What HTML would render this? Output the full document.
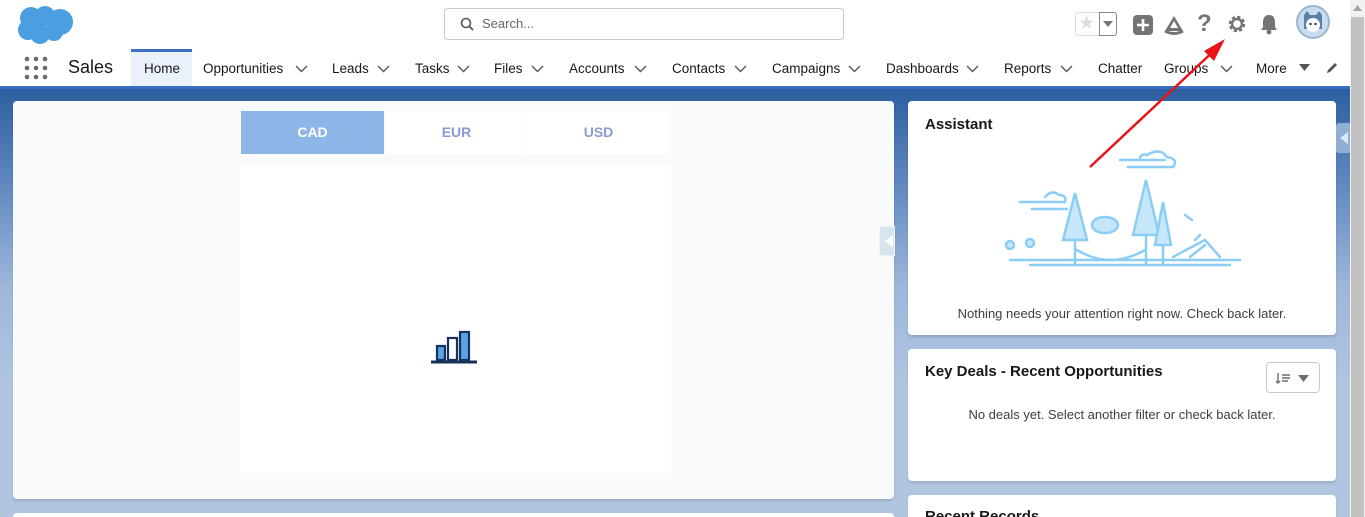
<!DOCTYPE html>
<html style="overflow:hidden;width:1365px;height:517px"><head><meta charset="utf-8">
<style>
*{margin:0;padding:0;box-sizing:border-box}
body{width:1365px;height:517px;overflow:hidden;font-family:"Liberation Sans",sans-serif;position:relative;background:#fff}
.abs{position:absolute}
.nav{position:absolute;top:61px;font-size:13.5px;color:#181818}
.chev{position:absolute;top:65px}
.bg{position:absolute;left:0;top:86px;width:1350px;height:431px;background:linear-gradient(#2b5d9e 0px,#5b85bd 90px,#9db6da 200px,#b1c5e0 300px,#b1c5e0 431px)}
.card{position:absolute;background:#fff;border-radius:4px;box-shadow:0 2px 2px rgba(0,0,0,.12)}
</style></head><body>
<svg class="abs" style="left:16px;top:4px" width="58" height="40" viewBox="0 0 58 40"><g fill="#4b9fe0"><circle cx="15" cy="14" r="11"/><circle cx="29" cy="12" r="10"/><circle cx="44" cy="18" r="13"/><circle cx="12" cy="26" r="10"/><circle cx="24" cy="30" r="10"/><circle cx="38" cy="28" r="9"/></g></svg>
<div class="abs" style="left:444px;top:8px;width:400px;height:32px;border:1px solid #c9c9c9;border-radius:4px;"></div>
<svg class="abs" style="left:460px;top:17px" width="14" height="14" viewBox="0 0 14 14"><circle cx="6" cy="6" r="4.5" fill="none" stroke="#555" stroke-width="1.6"/><path d="M9.3 9.3L13 13" stroke="#555" stroke-width="1.8"/></svg>
<div class="abs" style="left:482px;top:16px;font-size:13px;color:#666">Search...</div>
<div class="abs" style="left:1075px;top:12px;width:42px;height:24px;border:1px solid #ddd;border-radius:3px"></div>
<div class="abs" style="left:1099px;top:12px;width:18px;height:24px;border:1px solid #888;border-radius:0 3px 3px 0"></div>
<div class="abs" style="left:1078px;top:12px;font-size:19px;color:#ddd">★</div>
<svg class="abs" style="left:1103px;top:21px" width="10" height="6"><path d="M0 0H10L5 6Z" fill="#777"/></svg>
<div class="abs" style="left:1133px;top:15px;width:20px;height:20px;background:#747474;border-radius:4px"></div>
<svg class="abs" style="left:1133px;top:15px" width="20" height="20"><path d="M10 4V16M4 10H16" stroke="#fff" stroke-width="2.6"/></svg>
<svg class="abs" style="left:1163px;top:14px" width="22" height="22" viewBox="0 0 22 22"><path d="M11 2L20 17H2Z" fill="#747474"/><path d="M11 7L15 14H7Z" fill="#fff"/><path d="M2 17Q11 22 20 17" stroke="#747474" stroke-width="3" fill="none"/></svg>
<div class="abs" style="left:1197px;top:10px;font-size:24px;color:#747474;font-weight:bold">?</div>
<svg class="abs" style="left:1227px;top:14px" width="20" height="20" viewBox="0 0 20 20"><circle cx="10" cy="10" r="6.5" fill="none" stroke="#747474" stroke-width="3.5" stroke-dasharray="3 2.1"/><circle cx="10" cy="10" r="5" fill="none" stroke="#747474" stroke-width="2.5"/></svg>
<svg class="abs" style="left:1259px;top:13px" width="20" height="22" viewBox="0 0 20 22"><path d="M10 2C5 2 4 6 4 10V14L2 17H18L16 14V10C16 6 15 2 10 2Z" fill="#747474"/><circle cx="10" cy="19" r="2.4" fill="#747474"/></svg>
<div class="abs" style="left:1296px;top:5px;width:34px;height:34px;border-radius:50%;background:#c9dcef;border:2px solid #9bb6cf"></div>
<svg class="abs" style="left:1298px;top:7px" width="30" height="30" viewBox="0 0 30 30"><path d="M6 8L9 4L12 8H18L21 4L24 8V22H6Z" fill="#5c7fa6"/><circle cx="15" cy="18" r="7" fill="#fff"/><circle cx="12.5" cy="17" r="1.2" fill="#234"/><circle cx="17.5" cy="17" r="1.2" fill="#234"/></svg>
<div class="abs" style="left:24px;top:56px;width:24px;height:24px"><svg width="24" height="24"><g fill="#6b6b6b"><circle cx="3" cy="3" r="2.3"/><circle cx="12" cy="3" r="2.3"/><circle cx="21" cy="3" r="2.3"/><circle cx="3" cy="12" r="2.3"/><circle cx="12" cy="12" r="2.3"/><circle cx="21" cy="12" r="2.3"/><circle cx="3" cy="21" r="2.3"/><circle cx="12" cy="21" r="2.3"/><circle cx="21" cy="21" r="2.3"/></g></svg></div>
<div class="abs" style="left:68px;top:57px;font-size:18px;color:#181818">Sales</div>
<div class="abs" style="left:131px;top:49px;width:61px;height:37px;background:#eaf1fa;border-top:3px solid #3a6fc4"></div>
<div class="nav" style="left:144px">Home</div>
<div class="nav" style="left:203px">Opportunities</div>
<div class="nav" style="left:332px">Leads</div>
<div class="nav" style="left:415px">Tasks</div>
<div class="nav" style="left:494px">Files</div>
<div class="nav" style="left:569px">Accounts</div>
<div class="nav" style="left:672px">Contacts</div>
<div class="nav" style="left:772px">Campaigns</div>
<div class="nav" style="left:886px">Dashboards</div>
<div class="nav" style="left:1004px">Reports</div>
<div class="nav" style="left:1098px">Chatter</div>
<div class="nav" style="left:1164px">Groups</div>
<div class="nav" style="left:1256px">More</div>
<svg width="0" height="0" style="position:absolute"><defs><symbol id="c" viewBox="0 0 13 8"><path d="M1 1L6.5 6.5L12 1" fill="none" stroke="#555" stroke-width="1.4"/></symbol></defs></svg>
<svg class="chev" style="left:295px" width="13" height="8"><use href="#c"/></svg>
<svg class="chev" style="left:377px" width="13" height="8"><use href="#c"/></svg>
<svg class="chev" style="left:457px" width="13" height="8"><use href="#c"/></svg>
<svg class="chev" style="left:531px" width="13" height="8"><use href="#c"/></svg>
<svg class="chev" style="left:634px" width="13" height="8"><use href="#c"/></svg>
<svg class="chev" style="left:734px" width="13" height="8"><use href="#c"/></svg>
<svg class="chev" style="left:848px" width="13" height="8"><use href="#c"/></svg>
<svg class="chev" style="left:966px" width="13" height="8"><use href="#c"/></svg>
<svg class="chev" style="left:1060px" width="13" height="8"><use href="#c"/></svg>
<svg class="chev" style="left:1220px" width="13" height="8"><use href="#c"/></svg>
<svg class="abs" style="left:1299px;top:64px" width="11" height="7"><path d="M0 0H11L5.5 7Z" fill="#555"/></svg>
<svg class="abs" style="left:1325px;top:61px" width="14" height="14"><path d="M2 12L3 9L10 2L12 4L5 11Z" fill="#555"/></svg>
<div class="bg"></div>
<div class="abs" style="left:0;top:86px;width:1350px;height:3px;background:#3b6fc4"></div>
<div class="card" style="left:13px;top:101px;width:881px;height:398px;background:#f8fafc"></div>
<div class="abs" style="left:241px;top:111px;width:143px;height:43px;background:#8fb6e8;color:#fff;font-weight:bold;font-size:14px;text-align:center;line-height:43px">CAD</div>
<div class="abs" style="left:386px;top:111px;width:141px;height:43px;background:#fff;color:#8a9ad2;font-weight:bold;font-size:14px;text-align:center;line-height:43px">EUR</div>
<div class="abs" style="left:528px;top:111px;width:141px;height:43px;background:#fff;color:#8a9ad2;font-weight:bold;font-size:14px;text-align:center;line-height:43px">USD</div>
<div class="abs" style="left:240px;top:164px;width:431px;height:309px;background:#fff"></div>
<svg class="abs" style="left:430px;top:329px" width="48" height="36" viewBox="0 0 48 36"><path d="M1 33H47" stroke="#16325c" stroke-width="3"/><rect x="7" y="17" width="8" height="14" fill="#5aa2e6" stroke="#16325c" stroke-width="2.2"/><rect x="18" y="9" width="9" height="22" fill="#fff" stroke="#16325c" stroke-width="2.2"/><rect x="30" y="3" width="9" height="28" fill="#5aa2e6" stroke="#16325c" stroke-width="2.2"/></svg>
<div class="abs" style="left:879px;top:226px;width:16px;height:30px;background:#d8e4ee;border:1px solid #eef2f6;border-radius:3px 0 0 3px"></div>
<svg class="abs" style="left:885px;top:235px" width="8" height="12"><path d="M8 0V12L0 6Z" fill="#fff"/></svg>
<div class="card" style="left:13px;top:513px;width:881px;height:4px;border-radius:4px 4px 0 0"></div>
<div class="card" style="left:908px;top:101px;width:428px;height:234px"></div>
<div class="abs" style="left:925px;top:116px;font-size:15px;font-weight:bold;color:#181818">Assistant</div>
<svg class="abs" style="left:995px;top:145px" width="250" height="122" viewBox="0 0 250 122" fill="none" stroke="#8ccdf5" stroke-width="2.5" stroke-linecap="round">
<path d="M125 15H170M133 22H178M178 22Q184 14 172 12Q165 2 152 10Q145 8 145 15"/>
<path d="M25 57H70M37 64H72M70 57Q72 50 64 50Q57 44 50 52"/>
<path d="M68 95L80 48L92 95Z" fill="#c6e6fa"/>
<path d="M138 90L151 35L164 90Z" fill="#c6e6fa"/>
<path d="M160 100L168 57L176 100Z" fill="#c6e6fa"/>
<path d="M80 95V118M151 90V118M168 100V118"/>
<path d="M82 105Q115 125 150 105"/>
<ellipse cx="110" cy="80" rx="13" ry="8" fill="#c6e6fa"/>
<path d="M15 115H245M35 120H235"/>
<path d="M178 112L210 95L225 112M195 112L210 100"/>
<path d="M190 70L197 75M200 95L205 90"/>
<circle cx="15" cy="100" r="4" fill="#c6e6fa"/><circle cx="35" cy="98" r="4" fill="#c6e6fa"/>
</svg>
<div class="abs" style="left:908px;top:306px;width:428px;text-align:center;font-size:13px;color:#3e3e3c">Nothing needs your attention right now. Check back later.</div>
<div class="card" style="left:908px;top:349px;width:428px;height:132px"></div>
<div class="abs" style="left:925px;top:363px;font-size:15px;font-weight:bold;color:#181818">Key Deals - Recent Opportunities</div>
<div class="abs" style="left:1266px;top:362px;width:54px;height:31px;border:1px solid #c9c9c9;border-radius:4px"></div>
<svg class="abs" style="left:1275px;top:371px" width="16" height="14"><path d="M3 2V12M1 10L3 12L5 10M7 4H15M7 7H15M7 10H13" stroke="#706e6b" stroke-width="1.4" fill="none"/></svg>
<svg class="abs" style="left:1298px;top:375px" width="11" height="7"><path d="M0 0H11L5.5 7Z" fill="#706e6b"/></svg>
<div class="abs" style="left:908px;top:407px;width:428px;text-align:center;font-size:13px;color:#3e3e3c">No deals yet. Select another filter or check back later.</div>
<div class="card" style="left:908px;top:495px;width:428px;height:22px;border-radius:4px 4px 0 0"></div>
<div class="abs" style="left:925px;top:508px;font-size:15px;font-weight:bold;color:#181818;height:9px;overflow:hidden;line-height:17px">Recent Records</div>
<div class="abs" style="left:1336px;top:123px;width:14px;height:30px;background:#8fb0d4;border-radius:3px 0 0 3px"></div>
<svg class="abs" style="left:1340px;top:132px" width="8" height="12"><path d="M8 0V12L0 6Z" fill="#dbe7f3"/></svg>
<svg class="abs" style="left:1080px;top:25px" width="160" height="150"><path d="M10 142L138 22" stroke="#e8141a" stroke-width="2.5"/><path d="M145 14L124 26L134 36Z" fill="#e8141a"/></svg>
<div class="abs" style="left:1350px;top:0;width:15px;height:517px;background:#f1f1f1"></div>
<svg class="abs" style="left:1353px;top:5px" width="9" height="6"><path d="M0 6L4.5 0L9 6Z" fill="#a3a3a3"/></svg>
<div class="abs" style="left:1351px;top:17px;width:13px;height:500px;background:#c1c1c1"></div>
</body></html>
